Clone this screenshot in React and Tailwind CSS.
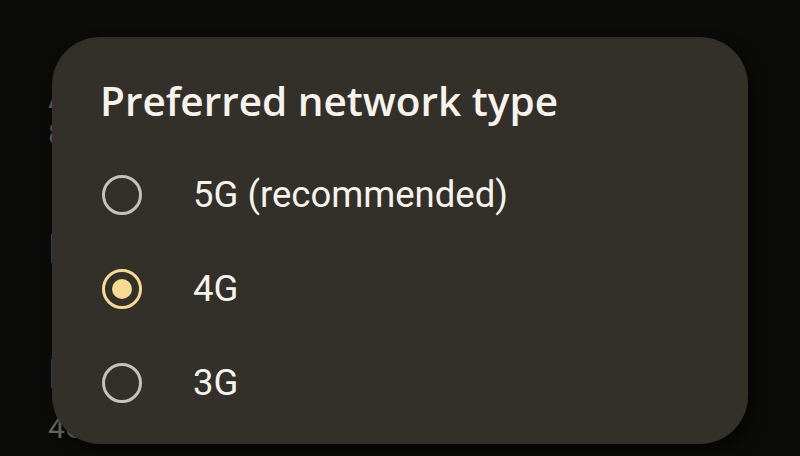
import React, { useState } from 'react';

const options = ['5G (recommended)', '4G', '3G'];

const Radio = ({ checked }) => (
  <span
    className={`flex items-center justify-center w-[40px] h-[40px] rounded-full border-[3.5px] ${checked ? 'border-[#f7da91]' : 'border-[#c5c2bb]'}`}
  >
    {checked && <span className="w-[20px] h-[20px] rounded-full bg-[#f7da91]"></span>}
  </span>
);

const SettingsBehind = () => (
  <div className="pl-[48px] text-[#5d5b55] font-['Roboto',sans-serif]">
    <div className="pt-[75px] text-[40px] leading-[40px] whitespace-nowrap">App data usage</div>
    <div className="mt-[4px] text-[30px] leading-[30px] whitespace-nowrap">8.21 GB mobile data used</div>
    <div className="mt-[81px] text-[40px] leading-[40px] whitespace-nowrap">Data warning &amp; limit</div>
    <div className="mt-[85px] text-[40px] leading-[40px] whitespace-nowrap">Preferred network type</div>
    <div className="mt-[18px] text-[30px] leading-[30px] text-[#6b6963] whitespace-nowrap">4G</div>
  </div>
);

export default function App() {
  const [selected, setSelected] = useState('4G');

  return (
    <div className="relative w-[800px] h-[456px] overflow-hidden bg-[#0b0b09]">
      <SettingsBehind />
      <div className="absolute left-[52px] top-[37px] w-[696px] h-[407px] rounded-[48px] bg-[#33302a] shadow-[6px_8px_16px_rgba(0,0,0,0.45)] pt-[40px]">
        <h2 className="pl-[48px] h-[48px] leading-[48px] text-[40.5px] font-semibold text-[#f6f3ec] font-['Open_Sans',sans-serif] whitespace-nowrap">
          Preferred network type
        </h2>
        <div className="mt-[23px]">
          {options.map(opt => (
            <button
              key={opt}
              onClick={() => setSelected(opt)}
              className="flex items-center w-full h-[94px] pl-[50px] gap-[51px] text-left"
            >
              <Radio checked={selected === opt} />
              <span className="text-[36.5px] leading-[40px] text-[#f6f3ec] font-['Roboto',sans-serif]">{opt}</span>
            </button>
          ))}
        </div>
      </div>
    </div>
  );
}
